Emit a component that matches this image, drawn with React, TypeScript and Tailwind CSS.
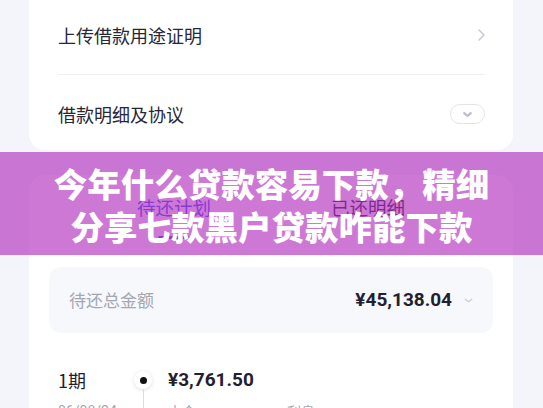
import React from "react";

const cjk = { fontFamily: '"Noto Sans CJK SC", "Noto Sans", sans-serif' };
const num = { fontFamily: 'Roboto, "Noto Sans CJK SC", sans-serif' };

const ChevronRight = () => (
  <svg width="7" height="12" viewBox="0 0 7 12" fill="none">
    <polyline points="1,1 6,6 1,11" stroke="#c4c7d0" strokeWidth="1.4" strokeLinecap="round" strokeLinejoin="round" />
  </svg>
);

const ChevronDown = ({ color, w, h, sw }: { color: string; w: number; h: number; sw: number }) => (
  <svg width={w} height={h} viewBox={`0 0 ${w} ${h}`} fill="none">
    <polyline
      points={`${sw},${sw} ${w / 2},${h - sw} ${w - sw},${sw}`}
      stroke={color}
      strokeWidth={sw}
      strokeLinecap="round"
      strokeLinejoin="round"
    />
  </svg>
);

export default function App() {
  return (
    <div className="relative w-[543px] h-[408px] overflow-hidden bg-[#f3f5fa]" style={cjk}>
      {/* top card */}
      <div className="ml-[29px] mr-[30px] bg-white rounded-b-[16px] pl-[29px] pr-[28px]">
        <div className="h-[74px] pb-[4px] flex items-center justify-between">
          <span className="text-[18px] text-[#262837]">上传借款用途证明</span>
          <ChevronRight />
        </div>
        <div className="h-px bg-[#eef0f4]" />
        <div className="h-[75px] pt-[3px] flex items-center justify-between">
          <span className="text-[18px] text-[#262837]">借款明细及协议</span>
          <div className="w-[35px] h-[20px] rounded-full border border-[#e2e4eb] flex items-center justify-center">
            <ChevronDown color="#b9bdcb" w={11} h={7} sw={2.2} />
          </div>
        </div>
      </div>

      {/* repayment card */}
      <div className="mt-[25px] ml-[29px] mr-[30px] bg-white rounded-t-[16px] h-[260px]">
        <div className="pt-[19px] flex justify-center gap-[120px]">
          <div className="flex flex-col items-center">
            <span className="text-[18.5px] leading-[26px] text-[#3d4ff5]">待还计划</span>
            <div className="mt-[16px] w-[32px] h-[3px] rounded-full bg-[#3d4ff5]" />
          </div>
          <div className="flex flex-col items-center">
            <span className="text-[18.5px] leading-[26px] text-[#1f2030]">已还明细</span>
          </div>
        </div>

        <div className="mt-[28px] mx-[20px] h-[66px] rounded-[12px] bg-[#f7f8fb] pl-[20px] pr-[20px] flex items-center justify-between">
          <span className="text-[17px] text-[#a4a7b1]">待还总金额</span>
          <div className="flex items-center gap-[12px]">
            <span className="text-[19px] font-bold text-[#1f2030]" style={num}>¥45,138.04</span>
            <ChevronDown color="#c9ccd5" w={9} h={5} sw={1.2} />
          </div>
        </div>

        <div className="mt-[34px] pl-[29px] flex">
          <div className="w-[76px] flex flex-col">
            <span className="text-[18px] leading-[26px] text-[#1f2030]">1期</span>
            <span className="mt-[8px] text-[14px] leading-[20px] text-[#a4a7b1]" style={num}>06/08/24</span>
          </div>
          <div className="w-[18px] flex flex-col items-center pt-[4px]">
            <div className="w-[18px] h-[18px] rounded-full bg-white shadow-[0_1px_4px_rgba(40,50,90,0.15)] flex items-center justify-center">
              <div className="w-[7px] h-[7px] rounded-full bg-[#111]" />
            </div>
            <div className="w-px h-[40px] bg-[#d9dce6]" />
          </div>
          <div className="ml-[16px] flex flex-col">
            <span className="text-[19px] leading-[26px] font-bold text-[#1f2030]" style={num}>¥3,761.50</span>
            <div className="mt-[8px] flex text-[14px] leading-[20px] text-[#a4a7b1]">
              <span className="w-[119px]">本金</span>
              <span>利息</span>
            </div>
          </div>
        </div>
      </div>

      {/* title banner overlay */}
      <div className="absolute left-0 top-[152px] w-full h-[103px] bg-[rgba(178,48,191,0.65)] flex flex-col items-center justify-center">
        <span className="text-[33.5px] leading-[43px] font-black text-white">今年什么贷款容易下款，精细</span>
        <span className="text-[33.5px] leading-[43px] font-black text-white">分享七款黑户贷款咋能下款</span>
      </div>
    </div>
  );
}
